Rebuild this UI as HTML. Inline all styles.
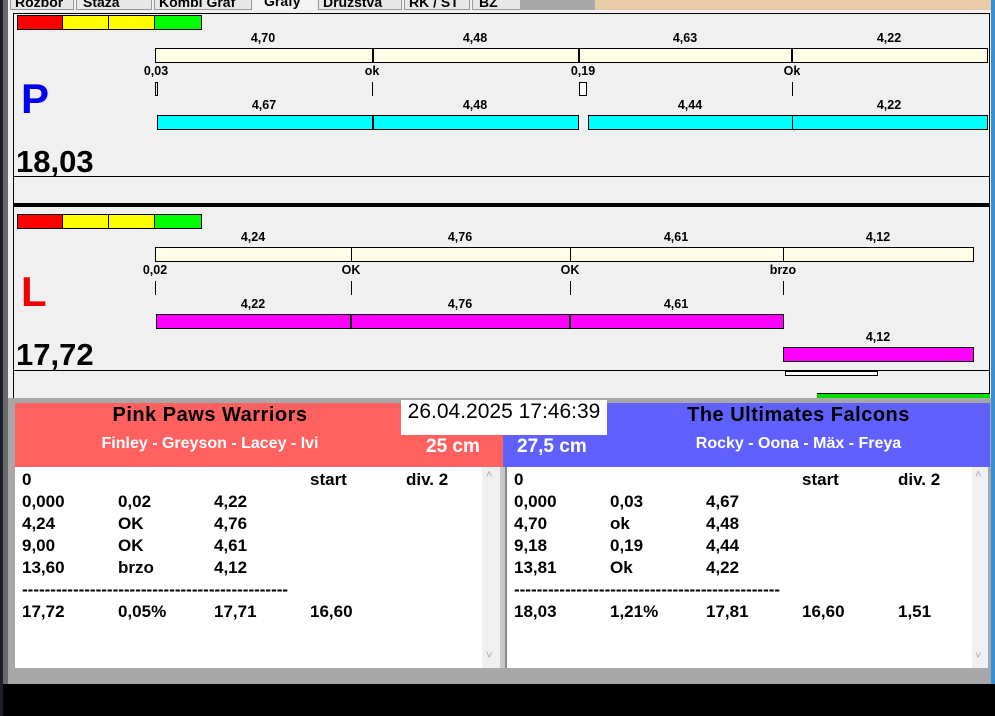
<!DOCTYPE html>
<html><head><meta charset="utf-8"><style>
*{margin:0;padding:0;box-sizing:border-box}
body{width:995px;height:716px;overflow:hidden;background:#000;font-family:"Liberation Sans",Arial,sans-serif;position:relative}
div,span{position:absolute}
.b{font-weight:bold}
.lab{font-size:12.5px;font-weight:bold;color:#000;transform:translateX(-50%);white-space:nowrap}
.bar{border:1px solid #000}
.tk{width:1px;background:#000}
.row{font-size:17px;font-weight:bold;color:#000}
</style></head><body>
<div style="left:0;top:0;width:3px;height:716px;background:#1a1f2a"></div>
<div style="left:3px;top:0;width:5px;height:684px;background:#6a6a6a"></div>
<div style="left:8px;top:0;width:983px;height:684px;background:#f0f0f0"></div>
<div style="left:991px;top:0;width:4px;height:684px;background:#3a8fd0"></div>
<div style="left:595px;top:0;width:396px;height:10px;background:#e8ccaa"></div>
<div style="left:520px;top:0;width:75px;height:10px;background:#a8a8a8"></div>
<div style="left:10px;top:-7px;height:17px;font-size:14px;font-weight:bold;color:#000;white-space:nowrap;overflow:hidden;width:510px">
<span style="left:0;top:0;width:64px;height:17px;border:1px solid #999;background:#e8e8e8;padding-left:4px">Rozbor</span>
<span style="left:66px;top:0;width:76px;height:17px;border:1px solid #999;background:#e8e8e8;padding-left:6px">Staza</span>
<span style="left:144px;top:0;width:98px;height:17px;border:1px solid #999;background:#e8e8e8;padding-left:4px">Kombi Graf</span>
<span style="left:244px;top:0;width:62px;height:17px;background:#f4f4f4;padding-left:10px">Grafy</span>
<span style="left:308px;top:0;width:84px;height:17px;border:1px solid #999;background:#e8e8e8;padding-left:4px">Druzstva</span>
<span style="left:394px;top:0;width:66px;height:17px;border:1px solid #999;background:#e8e8e8;padding-left:4px">RK / ST</span>
<span style="left:462px;top:0;width:60px;height:17px;border:1px solid #999;background:#e8e8e8;padding-left:6px">BZ</span>
</div>

<div style="left:13px;top:13px;width:977px;height:192px;border:1px solid #000;border-bottom:none;background:#f0f0f0"></div>
<div style="left:17px;top:15px;width:46px;height:15px;background:#f00;border:1px solid #000"></div>
<div style="left:62px;top:15px;width:47px;height:15px;background:#ff0;border:1px solid #000"></div>
<div style="left:108px;top:15px;width:47px;height:15px;background:#ff0;border:1px solid #000"></div>
<div style="left:154px;top:15px;width:48px;height:15px;background:#0f0;border:1px solid #000"></div>

<div class="lab" style="left:263px;top:31px">4,70</div>
<div class="lab" style="left:475px;top:31px">4,48</div>
<div class="lab" style="left:685px;top:31px">4,63</div>
<div class="lab" style="left:889px;top:31px">4,22</div>
<div class="bar" style="left:155px;top:48px;width:833px;height:15px;background:#fffde6"></div>
<div class="tk" style="left:372px;top:48px;height:15px;width:2px"></div>
<div class="tk" style="left:578px;top:48px;height:15px;width:2px"></div>
<div class="tk" style="left:791px;top:48px;height:15px;width:2px"></div>
<div class="lab" style="left:156px;top:64px">0,03</div>
<div class="lab" style="left:372px;top:64px">ok</div>
<div class="lab" style="left:583px;top:64px">0,19</div>
<div class="lab" style="left:792px;top:64px">Ok</div>
<div style="left:155px;top:82px;width:3px;height:14px;border:1px solid #000"></div>
<div class="tk" style="left:372px;top:82px;height:14px"></div>
<div style="left:579px;top:82px;width:8px;height:14px;border:1px solid #000;background:#fff"></div>
<div class="tk" style="left:792px;top:82px;height:14px"></div>
<div class="lab" style="left:264px;top:98px">4,67</div>
<div class="lab" style="left:475px;top:98px">4,48</div>
<div class="lab" style="left:690px;top:98px">4,44</div>
<div class="lab" style="left:889px;top:98px">4,22</div>
<div class="bar" style="left:157px;top:115px;width:422px;height:15px;background:#00ffff"></div>
<div class="tk" style="left:372px;top:115px;height:15px;width:2px"></div>
<div class="bar" style="left:588px;top:115px;width:400px;height:15px;background:#00ffff"></div>
<div class="tk" style="left:792px;top:115px;height:15px"></div>
<div class="b" style="left:21px;top:75px;font-size:42px;color:#0000ee;line-height:48px">P</div>
<div class="b" style="left:16px;top:145px;font-size:31px;color:#000;line-height:34px">18,03</div>
<div style="left:13px;top:176px;width:977px;height:1px;background:#000"></div>
<div style="left:13px;top:176px;width:1px;height:5px;background:#000"></div>
<div style="left:13px;top:203px;width:977px;height:4px;background:#000"></div>

<div style="left:13px;top:207px;width:1px;height:193px;background:#000"></div>
<div style="left:989px;top:207px;width:1px;height:193px;background:#000"></div>
<div style="left:17px;top:214px;width:46px;height:15px;background:#f00;border:1px solid #000"></div>
<div style="left:62px;top:214px;width:47px;height:15px;background:#ff0;border:1px solid #000"></div>
<div style="left:108px;top:214px;width:47px;height:15px;background:#ff0;border:1px solid #000"></div>
<div style="left:154px;top:214px;width:48px;height:15px;background:#0f0;border:1px solid #000"></div>
<div class="lab" style="left:253px;top:230px">4,24</div>
<div class="lab" style="left:460px;top:230px">4,76</div>
<div class="lab" style="left:676px;top:230px">4,61</div>
<div class="lab" style="left:878px;top:230px">4,12</div>
<div class="bar" style="left:155px;top:247px;width:819px;height:15px;background:#fffde6"></div>
<div class="tk" style="left:351px;top:247px;height:15px"></div>
<div class="tk" style="left:570px;top:247px;height:15px"></div>
<div class="tk" style="left:783px;top:247px;height:15px"></div>
<div class="lab" style="left:155px;top:263px">0,02</div>
<div class="lab" style="left:351px;top:263px">OK</div>
<div class="lab" style="left:570px;top:263px">OK</div>
<div class="lab" style="left:783px;top:263px">brzo</div>
<div class="tk" style="left:155px;top:281px;height:14px"></div>
<div class="tk" style="left:351px;top:281px;height:14px"></div>
<div class="tk" style="left:570px;top:281px;height:14px"></div>
<div class="tk" style="left:783px;top:281px;height:14px"></div>
<div class="lab" style="left:253px;top:297px">4,22</div>
<div class="lab" style="left:460px;top:297px">4,76</div>
<div class="lab" style="left:676px;top:297px">4,61</div>
<div class="bar" style="left:156px;top:314px;width:628px;height:15px;background:#ff00ff"></div>
<div class="tk" style="left:350px;top:314px;height:15px;width:2px"></div>
<div class="tk" style="left:569px;top:314px;height:15px;width:2px"></div>
<div class="lab" style="left:878px;top:330px">4,12</div>
<div class="bar" style="left:783px;top:347px;width:191px;height:15px;background:#ff00ff"></div>
<div class="b" style="left:21px;top:268px;font-size:42px;color:#ee0000;line-height:48px">L</div>
<div class="b" style="left:16px;top:338px;font-size:31px;color:#000;line-height:34px">17,72</div>
<div style="left:13px;top:370px;width:977px;height:1px;background:#000"></div>
<div style="left:13px;top:370px;width:1px;height:5px;background:#000"></div>
<div style="left:785px;top:371px;width:93px;height:5px;border:1px solid #000;background:#fff"></div>
<div style="left:817px;top:393px;width:173px;height:5px;background:#00dd00;border-top:1px solid #000"></div>

<div style="left:8px;top:398px;width:983px;height:286px;background:#a8a8a8"></div>
<div style="left:15px;top:403px;width:488px;height:64px;background:#ff6060"></div>
<div style="left:503px;top:403px;width:487px;height:64px;background:#6060ff"></div>
<div class="b" style="left:15px;top:404px;width:390px;text-align:center;font-size:20px;letter-spacing:0.5px;color:#000">Pink Paws Warriors</div>
<div class="b" style="left:15px;top:435px;width:390px;text-align:center;font-size:16px;color:#fff">Finley - Greyson - Lacey - Ivi</div>
<div style="left:401px;top:400px;width:206px;height:35px;background:#fff"></div>
<div style="left:401px;top:400px;width:206px;text-align:center;font-size:21px;color:#000;white-space:nowrap">26.04.2025 17:46:39</div>
<div class="b" style="left:426px;top:436px;font-size:19px;color:#fff">25 cm</div>
<div class="b" style="left:517px;top:436px;font-size:19px;color:#fff">27,5 cm</div>
<div class="b" style="left:607px;top:404px;width:383px;text-align:center;font-size:20px;letter-spacing:0.5px;color:#000">The Ultimates Falcons</div>
<div class="b" style="left:607px;top:435px;width:383px;text-align:center;font-size:16px;color:#fff">Rocky - Oona - Mäx - Freya</div>

<div style="left:15px;top:467px;width:485px;height:202px;background:#fff;border-right:1px solid #ddd"></div>
<div style="left:482px;top:467px;width:18px;height:202px;background:#f0f0f0"></div>
<div style="left:486px;top:469px;font-size:11px;color:#aaa">˄</div>
<div style="left:486px;top:650px;font-size:11px;color:#aaa">˅</div>
<div style="left:500px;top:467px;width:7px;height:202px;background:#c8c8c8;border-right:2px solid #888"></div>
<div style="left:507px;top:467px;width:481px;height:202px;background:#fff"></div>
<div style="left:972px;top:467px;width:16px;height:202px;background:#f0f0f0"></div>
<div style="left:975px;top:469px;font-size:11px;color:#aaa">˄</div>
<div style="left:975px;top:650px;font-size:11px;color:#aaa">˅</div>
<div style="left:15px;top:668px;width:976px;height:16px;background:#a8a8a8"></div>

<div class="row" style="left:22px;top:469px;line-height:22px">0<br>0,000<br>4,24<br>9,00<br>13,60<br><span style="position:static">-----------------------------------------------</span><br>17,72</div>
<div class="row" style="left:118px;top:491px;line-height:22px">0,02<br>OK<br>OK<br>brzo<br><br>0,05%</div>
<div class="row" style="left:214px;top:491px;line-height:22px">4,22<br>4,76<br>4,61<br>4,12<br><br>17,71</div>
<div class="row" style="left:310px;top:469px;line-height:22px">start<br><br><br><br><br><br>16,60</div>
<div class="row" style="left:406px;top:469px;line-height:22px">div. 2</div>

<div class="row" style="left:514px;top:469px;line-height:22px">0<br>0,000<br>4,70<br>9,18<br>13,81<br><span style="position:static">-----------------------------------------------</span><br>18,03</div>
<div class="row" style="left:610px;top:491px;line-height:22px">0,03<br>ok<br>0,19<br>Ok<br><br>1,21%</div>
<div class="row" style="left:706px;top:491px;line-height:22px">4,67<br>4,48<br>4,44<br>4,22<br><br>17,81</div>
<div class="row" style="left:802px;top:469px;line-height:22px">start<br><br><br><br><br><br>16,60</div>
<div class="row" style="left:898px;top:469px;line-height:22px">div. 2<br><br><br><br><br><br>1,51</div>
</body></html>
